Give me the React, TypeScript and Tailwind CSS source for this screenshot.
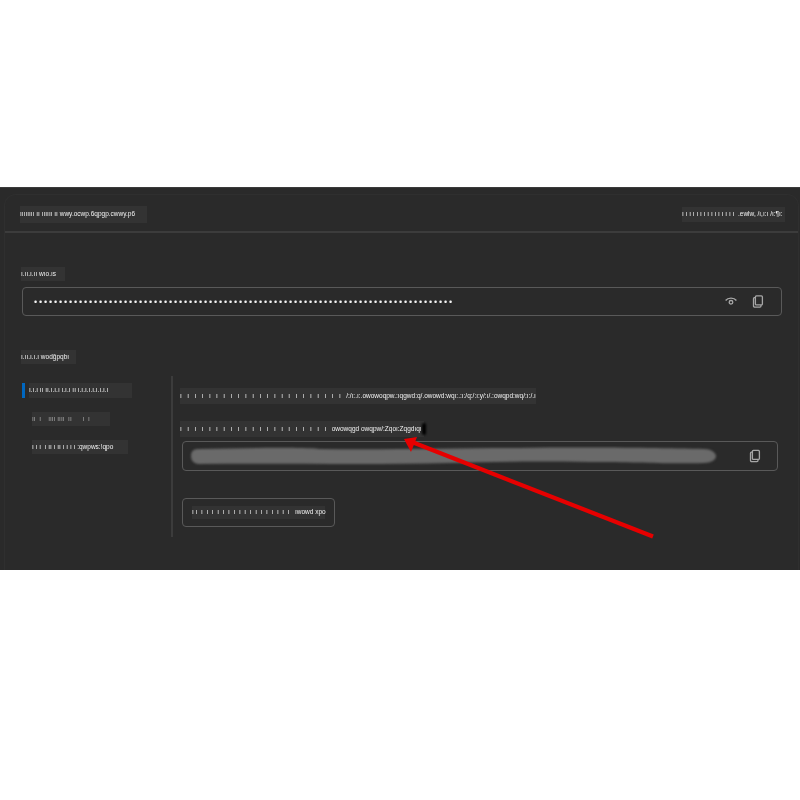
const FONT = "[font-family:'Liberation_Sans',sans-serif]";

function Garble({ text, w, h, className = "" }: { text: string; w: string; h: string; className?: string }) {
  return (
    <div className={`${w} ${h} bg-[#333333] text-[6.5px] leading-none flex items-center whitespace-pre shrink-0 [will-change:transform] ${className}`}>
      <span>{text}</span>
    </div>
  );
}

function EyeIcon() {
  return (
    <svg width="14" height="14" viewBox="0 0 14 14" fill="none" stroke="#a6a6a6" strokeWidth="1.3">
      <path d="M1.6 6 C4 2.7 10 2.7 12.4 6" />
      <circle cx="7" cy="7.8" r="1.8" />
    </svg>
  );
}

function CopyIcon() {
  return (
    <svg width="14" height="14" viewBox="0 0 14 14" fill="none" stroke="#a6a6a6" strokeWidth="1.3">
      <rect x="4.4" y="1.4" width="7" height="9" rx="1" />
      <path d="M4.4 3.2 H3.4 A1 1 0 0 0 2.5 4.2 V11.4 A1.2 1.2 0 0 0 3.7 12.6 H9 A1 1 0 0 0 10 11.6 V10.4" />
    </svg>
  );
}

function Redaction() {
  return (
    <svg width="530" height="20" viewBox="0 0 530 20" className="shrink-0">
      <path
        d="M9 3 C60 2 110 1 130 3 C200 4 260 2 330 2 C400 1 470 2 515 3 C524 3 527 8 527 10 C527 14 522 17 515 17 C470 18 450 16 400 16 C340 15 300 16 260 17 C180 19 90 17 9 18 C4 17 2 14 2 10 C2 6 4 3 9 3 Z"
        fill="#6a6a6a"
        style={{ filter: "blur(0.9px)" }}
      />
    </svg>
  );
}

export default function App() {
  return (
    <div className={`relative w-[800px] h-[800px] bg-white pt-[187px] text-[#f2f2f2] ${FONT}`}>
      <div className="h-[383px] bg-[#2a2a2a] border-t border-[#3b3b3b] pt-[6px] pl-[4px] pr-[1px]">
        <div className="h-full border-l border-t border-r border-[#2f2f2f] rounded-t-[12px]">
          <div className="h-[38px] border-b-2 border-[#3c3c3c] flex items-center justify-between pl-[15px] pr-[13px] pt-[3px]">
            <Garble w="w-[127px]" h="h-[17px]" text="ıııııııı ıı ıııııı ıı wwy.ocwp.6qpgp.cwwy.p6" />
            <Garble w="w-[103px]" h="h-[15px]" text="ı ı ı ı ı ı ı ı ı ı ı ı ı ı ı  .ewlw, /ı,ı:ı /ı:¶ı:" />
          </div>

          <div className="pl-[16px] pr-[13px] pt-[34px]">
            <Garble w="w-[44px]" h="h-[14px]" text="ı.ıı.ı.ıı wıo.ıs" />
            <div className="mt-[6px] ml-[1px] w-[760px] h-[29px] border border-[#595959] rounded-[4px] flex items-center justify-between pl-[11px] pr-[15px]">
              <span className="text-[9px] tracking-[1.85px] leading-none pt-[1px] [will-change:transform]">
                {"•".repeat(84)}
              </span>
              <div className="flex items-center gap-[14px] -translate-y-[0.5px]">
                <EyeIcon />
                <div className="-translate-x-[1px]"><CopyIcon /></div>
              </div>
            </div>

            <Garble className="mt-[34px]" w="w-[55px]" h="h-[14px]" text="ı.ıı.ı.ı.ı wodğpqbı" />

            <div className="mt-[12px] flex h-[161px]">
              <div className="w-[149px] ml-[1px] pt-[7px]">
                <div className="flex">
                  <div className="w-[3px] h-[15px] bg-[#0067c0]" />
                  <Garble className="ml-[4px]" w="w-[103px]" h="h-[15px]" text="ı.ı.ı ıı ıı.ı.ı.ı ı.ı.ı ıı ı.ı.ı.ı.ı.ı.ı.ı.ı" />
                </div>
                <Garble className="mt-[14px] ml-[10px] text-[#a8a8a8]" w="w-[78px]" h="h-[14px]" text="ıı  ı    ıııı ıııı  ıı      ı  ı" />
                <Garble className="mt-[14px] ml-[10px]" w="w-[96px]" h="h-[14px]" text="ı ı ı  ı ıı ı ıı ı ı ı ı :qwpws:!qpo" />
              </div>
              <div className="w-[2px] bg-[#3c3c3c]" />
              <div className="pl-[7px] pt-[12px] flex-1">
                <Garble w="w-[356px]" h="h-[16px]" text={"ı   ".repeat(23) + "/:/ı:.ı:.owowoqpw.:ıqgwd:q/.owowd:wqı:.:ı:/q:/:ı:y/:ı/.:owqpd:wq/:ı:/.ı"} />
                <div className="relative mt-[17px] w-[244px]">
                  <Garble w="w-[244px]" h="h-[16px]" text={"ı   ".repeat(21) + "owowqgd owqpw/:Zqoı:Zqgdıqı"} />
                  <div className="absolute -right-[2px] top-[2px] w-[4px] h-[12px] rounded-full bg-black blur-[1px]" />
                </div>
                <div className="mt-[4px] ml-[2px] w-[596px] h-[30px] border border-[#595959] rounded-[4px] flex items-center pl-[6px] pr-[15px]">
                  <Redaction />
                  <div className="ml-auto">
                    <CopyIcon />
                  </div>
                </div>
                <div className="mt-[27px] ml-[2px] w-[153px] h-[29px] border border-[#595959] rounded-[4px] flex items-center pl-[9px]">
                  <Garble w="w-[133px]" h="h-[13px]" text={"ı ı  " + "ı  ".repeat(17) + " ıwowd xpo"} />
                </div>
              </div>
            </div>
          </div>
        </div>
      </div>

      <svg className="absolute left-0 top-0 pointer-events-none" width="800" height="800" viewBox="0 0 800 800">
        <path d="M653 536.5 L412 442" stroke="#e60000" strokeWidth="4.2" fill="none" />
        <polygon points="404,439 417,437 411,452" fill="#e60000" />
      </svg>
    </div>
  );
}
